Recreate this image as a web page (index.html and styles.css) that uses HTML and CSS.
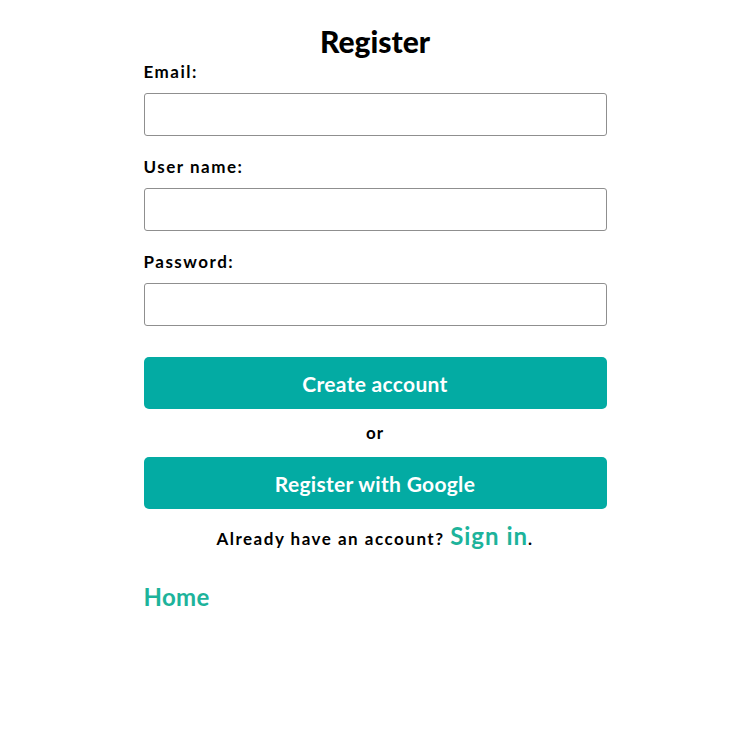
FILE: index.html
```html
<!DOCTYPE html>
<html lang="en">
<head>
    <meta charset="UTF-8">
    <meta name="viewport" content="width=device-width, initial-scale=1.0">
    <title>Register</title>
    <link rel="stylesheet" href="styles.css">
</head>
<body>

<div class="register">
    <h1>Register</h1>
    <form class="register-form" onsubmit="return false;">
        <label for="email">Email:</label>
        <input type="email" id="email">
        <label for="username">User name:</label>
        <input type="text" id="username">
        <label for="password">Password:</label>
        <input type="password" id="password">
        <button type="submit" class="btn">Create account</button>
        <p class="or">or</p>
        <button type="button" class="btn">Register with Google</button>
    </form>
    <p class="signin">Already have an account? <a href="#">Sign in</a>.</p>
    <a class="home" href="#">Home</a>
</div>

</body>
</html>
```

FILE: styles.css
```css
body {
    font-family: 'Lato', sans-serif;
    background-color: #ffffff;
    color: #000000;
    margin: 0;
    padding: 0;
}
.register {
    width: 463px;
    margin: 0 auto;
    padding-top: 23px;
}
.register h1 {
    margin: 0;
    text-align: center;
    font-size: 30px;
    font-weight: 900;
    line-height: 36px;
}
.register-form {
    display: flex;
    flex-direction: column;
}
.register-form label {
    font-size: 17px;
    font-weight: 700;
    letter-spacing: 1.5px;
    line-height: 22px;
    margin-top: 2px;
    margin-bottom: 10px;
}
.register-form input {
    height: 43px;
    box-sizing: border-box;
    border: 1px solid #8f8f8f;
    border-radius: 3px;
    margin-bottom: 18px;
    font-size: 16px;
    padding: 0 10px;
}
.btn {
    height: 52px;
    background-color: #03aba3;
    color: #ffffff;
    border: none;
    border-radius: 5px;
    font-family: inherit;
    font-size: 21px;
    font-weight: 700;
    letter-spacing: 0.3px;
    cursor: pointer;
}
.register-form input + .btn {
    margin-top: 13px;
}
.or {
    margin: 12px 0 13px;
    text-align: center;
    font-size: 17px;
    font-weight: 700;
    letter-spacing: 1px;
    line-height: 23px;
}
.signin {
    margin: 12px 0 0;
    text-align: center;
    font-size: 17px;
    font-weight: 700;
    letter-spacing: 1.5px;
}
.signin a {
    color: #1db39b;
    text-decoration: none;
    font-size: 24px;
    letter-spacing: 1px;
}
.home {
    display: inline-block;
    margin-top: 32px;
    color: #1db39b;
    text-decoration: none;
    font-size: 24px;
    font-weight: 700;
    letter-spacing: 0.3px;
}
```
